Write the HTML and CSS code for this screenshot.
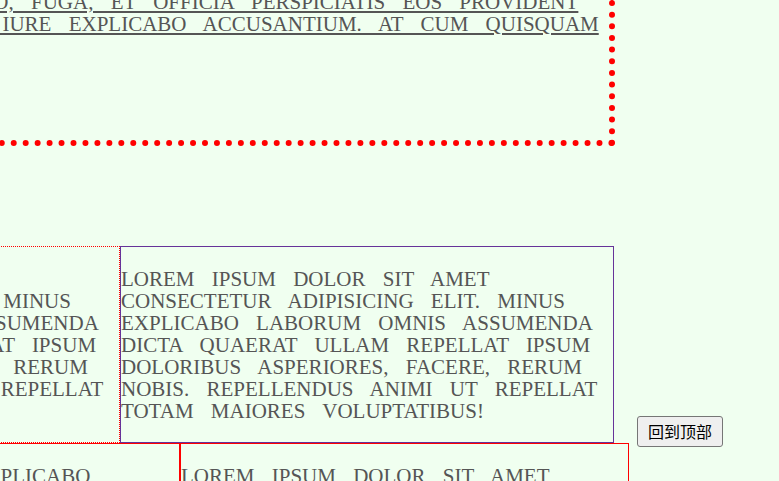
FILE: index.html
```html
<!DOCTYPE html>
<html lang="zh-CN">
<head>
<meta charset="utf-8">
<title>边框示例</title>
<link rel="stylesheet" href="styles.css">
</head>
<body>
<div class="hero">
  <p class="hero-text">quo, fuga, et officia perspiciatis eos provident<br>id iure explicabo accusantium. at cum quisquam</p>
</div>
<div class="row row-b">
  <div class="card card-dotted">Lorem ipsum dolor sit amet consectetur adipisicing elit. Minus explicabo laborum omnis assumenda dicta quaerat ullam repellat ipsum doloribus asperiores, facere, rerum nobis. Repellendus animi ut repellat totam maiores voluptatibus!</div>
  <div class="card card-purple">Lorem ipsum dolor sit amet consectetur adipisicing elit. Minus explicabo laborum omnis assumenda dicta quaerat ullam repellat ipsum doloribus asperiores, facere, rerum nobis. Repellendus animi ut repellat totam maiores voluptatibus!</div>
</div>
<div class="row row-c">
  <div class="card card-wide">Lorem ipsum dolor sit amet consectetur adipisicing elit. Minus explicabo laborum omnis assumenda dicta quaerat ullam repellat ipsum doloribus asperiores, facere, rerum nobis. Repellendus animi ut repellat totam maiores voluptatibus!</div>
  <div class="card card-red">Lorem ipsum dolor sit amet consectetur adipisicing elit. Minus explicabo laborum omnis assumenda dicta quaerat ullam repellat ipsum doloribus asperiores, facere, rerum nobis. Repellendus animi ut repellat totam maiores voluptatibus!</div>
</div>
<button class="top-btn" type="button">回到顶部</button>
</body>
</html>
```
FILE: styles.css
```css
html, body {
  margin: 0;
  padding: 0;
  background: #f0fff0;
  overflow: hidden;
}
body {
  font-family: "Liberation Serif", "Times New Roman", serif;
  font-size: 21px;
  line-height: 22px;
  color: #555;
  text-transform: uppercase;
  word-spacing: 12px;
}
.hero {
  box-sizing: border-box;
  width: 676px;
  height: 181px;
  margin: -35px 0 0 -61px;
  padding: 20px 12px 0 18px;
  border: 6px dotted #f00;
}
.hero-text {
  margin: 0;
  white-space: nowrap;
  text-decoration: underline;
}
.row {
  display: flex;
}
.row-b {
  margin: 100px 0 0 -374px;
}
.row-c {
  margin-left: -875px;
}
.card {
  box-sizing: border-box;
  flex: none;
  padding: 21px 0 20px;
}
.card-dotted {
  width: 494px;
  border: 1px dotted #f00;
}
.card-purple {
  width: 494px;
  border: 1px solid #663399;
}
.card-wide {
  width: 1055px;
  border: 1px solid #f00;
}
.card-red {
  width: 449px;
  border: 1px solid #f00;
}
.top-btn {
  position: fixed;
  right: 56px;
  bottom: 34px;
  padding: 3px 10px;
  font-family: "Noto Sans CJK SC", "Microsoft YaHei", sans-serif;
  font-size: 16px;
  line-height: 23px;
  color: #000;
  text-transform: none;
  word-spacing: 0;
  background: #efefef;
  border: 1px solid #767676;
  border-radius: 3px;
}
```
